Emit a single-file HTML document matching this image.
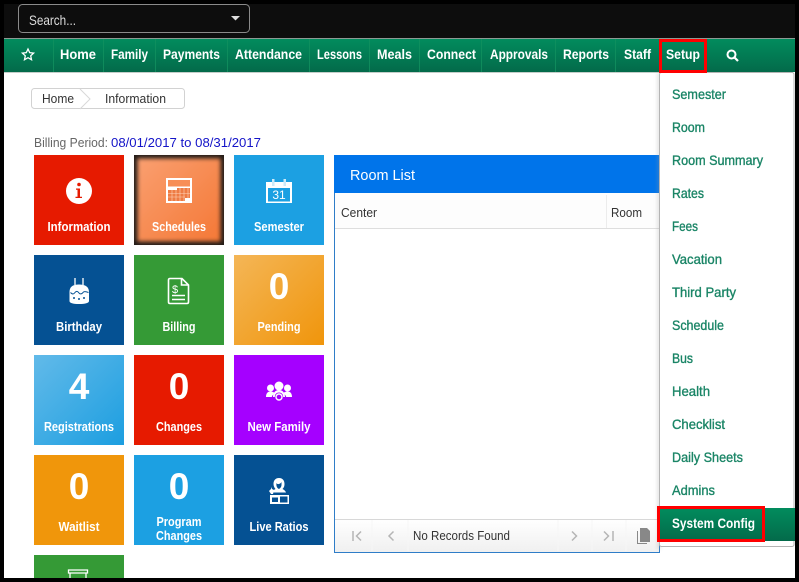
<!DOCTYPE html>
<html><head><meta charset="utf-8"><style>
html,body{margin:0;padding:0;background:#000;width:799px;height:582px;overflow:hidden}
svg{display:block}
text{font-family:"Liberation Sans",sans-serif}
.n{font-size:14px;font-weight:bold;fill:#fff}
.m{font-size:14px;font-weight:normal;fill:#1a8566;stroke:#1a8566;stroke-width:.35px}
.l{font-size:13px;font-weight:bold;fill:#fff;text-anchor:middle}
.b{font-size:37px;font-weight:bold;fill:#fff;text-anchor:middle}
.g{font-size:13px;fill:#333}
</style></head><body>
<svg width="799" height="582" viewBox="0 0 799 582" xmlns="http://www.w3.org/2000/svg">
<defs>
<linearGradient id="nav" x1="0" y1="0" x2="0" y2="1"><stop offset="0" stop-color="#028c5d"/><stop offset="1" stop-color="#036a4a"/></linearGradient>
<linearGradient id="sch" x1="0" y1="0" x2="1" y2="1"><stop offset="0" stop-color="#fa9f70"/><stop offset="1" stop-color="#f47836"/></linearGradient>
<linearGradient id="pen" x1="0" y1="0" x2="1" y2="1"><stop offset="0" stop-color="#f4b657"/><stop offset="1" stop-color="#f0950b"/></linearGradient>
<linearGradient id="reg" x1="0" y1="0" x2="1" y2="1"><stop offset="0" stop-color="#62bae9"/><stop offset="1" stop-color="#1c9ee0"/></linearGradient>
<linearGradient id="foot" x1="0" y1="0" x2="0" y2="1"><stop offset="0" stop-color="#fff"/><stop offset="1" stop-color="#f0f0f0"/></linearGradient>
<filter id="blur" x="-10%" y="-10%" width="120%" height="120%"><feGaussianBlur stdDeviation="2.200"/></filter>
<filter id="sh" x="-100%" y="-5%" width="300%" height="110%"><feGaussianBlur stdDeviation="1.500"/></filter>
<clipPath id="page"><rect x="4" y="4" width="791" height="574"/></clipPath>
</defs>
<rect width="799" height="582" fill="#000"/>
<g clip-path="url(#page)">
<rect x="4" y="4" width="791" height="574" fill="#fff"/>
<!-- top bar -->
<rect x="4" y="4" width="791" height="34" fill="#0d0d0d"/>
<rect x="18.500" y="4.500" width="231" height="28" rx="4" fill="#0d0d0d" stroke="#8a8a8a"/>
<text x="29" y="25" font-size="14" fill="#ddd" textLength="47" lengthAdjust="spacingAndGlyphs">Search...</text>
<path d="M231 16h9l-4.500 4.500z" fill="#ddd"/>
<!-- nav -->
<rect x="4" y="38" width="791" height="1" fill="#8c9a94"/>
<rect x="4" y="39" width="791" height="33" fill="url(#nav)"/>
<rect x="4" y="72" width="655" height="1" fill="#c4cdc9"/>
<g fill="#12915f" opacity=".8">
<rect x="53" y="39" width="1" height="33"/><rect x="103" y="39" width="1" height="33"/><rect x="155" y="39" width="1" height="33"/><rect x="227" y="39" width="1" height="33"/><rect x="309" y="39" width="1" height="33"/><rect x="369" y="39" width="1" height="33"/><rect x="419" y="39" width="1" height="33"/><rect x="481" y="39" width="1" height="33"/><rect x="555" y="39" width="1" height="33"/><rect x="615" y="39" width="1" height="33"/>
</g>
<path d="M28 49l1.700 3.600 3.900.5-2.900 2.700.8 3.900-3.500-2-3.500 2 .8-3.900-2.900-2.700 3.900-.5z" fill="none" stroke="#fff" stroke-width="1.300"/>
<text class="n" x="60" y="59" textLength="36" lengthAdjust="spacingAndGlyphs">Home</text>
<text class="n" x="111" y="59" textLength="37" lengthAdjust="spacingAndGlyphs">Family</text>
<text class="n" x="163" y="59" textLength="57" lengthAdjust="spacingAndGlyphs">Payments</text>
<text class="n" x="235" y="59" textLength="67" lengthAdjust="spacingAndGlyphs">Attendance</text>
<text class="n" x="317" y="59" textLength="45" lengthAdjust="spacingAndGlyphs">Lessons</text>
<text class="n" x="377" y="59" textLength="35" lengthAdjust="spacingAndGlyphs">Meals</text>
<text class="n" x="427" y="59" textLength="49" lengthAdjust="spacingAndGlyphs">Connect</text>
<text class="n" x="490" y="59" textLength="58" lengthAdjust="spacingAndGlyphs">Approvals</text>
<text class="n" x="563" y="59" textLength="46" lengthAdjust="spacingAndGlyphs">Reports</text>
<text class="n" x="624" y="59" textLength="27" lengthAdjust="spacingAndGlyphs">Staff</text>
<text class="n" x="666" y="59" textLength="34" lengthAdjust="spacingAndGlyphs">Setup</text>
<circle cx="731.500" cy="54.500" r="4" fill="none" stroke="#fff" stroke-width="2"/><path d="M734.500 57.500l3.500 3.500" stroke="#fff" stroke-width="2.200"/>
<!-- breadcrumb -->
<rect x="31.500" y="88.500" width="153" height="20" rx="3" fill="#fff" stroke="#d2d2d2"/>
<path d="M80 89l10 10-10 10" fill="#fff" stroke="#d8d8d8"/>
<text x="42" y="103" class="g" textLength="32" lengthAdjust="spacingAndGlyphs">Home</text>
<text x="105" y="103" class="g" textLength="61" lengthAdjust="spacingAndGlyphs">Information</text>
<!-- billing -->
<text x="34" y="147" font-size="13" fill="#666" textLength="74" lengthAdjust="spacingAndGlyphs">Billing Period:</text>
<text x="111" y="147" font-size="13" fill="#1414c8" textLength="150" lengthAdjust="spacingAndGlyphs">08/01/2017 to 08/31/2017</text>
<!-- tiles -->
<rect x="34" y="155" width="90" height="90" fill="#e61a00"/>
<rect x="134" y="155" width="90" height="90" fill="#231c18"/>
<rect x="137.500" y="158.500" width="83" height="83" fill="url(#sch)" filter="url(#blur)"/>
<rect x="234" y="155" width="90" height="90" fill="#1ca0e2"/>
<rect x="34" y="255" width="90" height="90" fill="#055193"/>
<rect x="134" y="255" width="90" height="90" fill="#359a36"/>
<rect x="234" y="255" width="90" height="90" fill="url(#pen)"/>
<rect x="34" y="355" width="90" height="90" fill="url(#reg)"/>
<rect x="134" y="355" width="90" height="90" fill="#e61a00"/>
<rect x="234" y="355" width="90" height="90" fill="#a500ff"/>
<rect x="34" y="455" width="90" height="90" fill="#f0960b"/>
<rect x="134" y="455" width="90" height="90" fill="#1ca0e2"/>
<rect x="234" y="455" width="90" height="90" fill="#055193"/>
<rect x="34" y="555" width="90" height="30" fill="#359a36"/>
<text class="l" x="79" y="231" textLength="63" lengthAdjust="spacingAndGlyphs">Information</text>
<text class="l" x="179" y="231" textLength="54" lengthAdjust="spacingAndGlyphs">Schedules</text>
<text class="l" x="279" y="231" textLength="50" lengthAdjust="spacingAndGlyphs">Semester</text>
<text class="l" x="79" y="331" textLength="46" lengthAdjust="spacingAndGlyphs">Birthday</text>
<text class="l" x="179" y="331" textLength="33" lengthAdjust="spacingAndGlyphs">Billing</text>
<text class="l" x="279" y="331" textLength="43" lengthAdjust="spacingAndGlyphs">Pending</text>
<text class="l" x="79" y="431" textLength="70" lengthAdjust="spacingAndGlyphs">Registrations</text>
<text class="l" x="179" y="431" textLength="46" lengthAdjust="spacingAndGlyphs">Changes</text>
<text class="l" x="279" y="431" textLength="63" lengthAdjust="spacingAndGlyphs">New Family</text>
<text class="l" x="79" y="531" textLength="41" lengthAdjust="spacingAndGlyphs">Waitlist</text>
<text class="l" x="179" y="526" textLength="45" lengthAdjust="spacingAndGlyphs">Program</text>
<text class="l" x="179" y="540" textLength="46" lengthAdjust="spacingAndGlyphs">Changes</text>
<text class="l" x="279" y="531" textLength="59" lengthAdjust="spacingAndGlyphs">Live Ratios</text>
<text class="b" x="279" y="299">0</text>
<text class="b" x="79" y="399">4</text>
<text class="b" x="179" y="399">0</text>
<text class="b" x="79" y="499">0</text>
<text class="b" x="179" y="499">0</text>
<!-- info icon -->
<circle cx="79" cy="191" r="13" fill="#fff"/>
<circle cx="79" cy="184.500" r="1.800" fill="#e61a00"/>
<path d="M76 188.500h4v8.300h2v1.200h-6.500v-1.200h2v-7.100h-1.500z" fill="#e61a00"/>
<!-- schedules icon -->
<path d="M166 178h26v25h-26z" fill="#fff"/>
<rect x="168" y="180" width="22" height="6.500" fill="#f78e57"/>
<path d="M168 190h9v-2h13v10h-5v3h-17z" fill="#ee7b44"/>
<path d="M168 193.500h22M168 197h17M172 190v11M176 190v11M180 188v13M184 188v13M188 188v10" stroke="#ffd4b8" stroke-width=".6"/>
<!-- semester icon -->
<rect x="266" y="182" width="26" height="21" fill="#fff"/>
<rect x="268" y="188" width="22" height="13.500" fill="#1ca0e2"/>
<rect x="272" y="179" width="2.500" height="7" fill="#cdeaf8"/><rect x="283.500" y="179" width="2.500" height="7" fill="#cdeaf8"/>
<text x="279" y="199" font-size="12" fill="#fff" text-anchor="middle">31</text>
<!-- birthday icon -->
<path d="M75 278v7M83 278v7" stroke="#fff" stroke-width="1.300"/>
<path d="M69.500 292c0-5 3-7.500 9.500-7.500s10 2.500 10 7.500v9c0 2-4 3-10 3s-9.500-1-9.500-3z" fill="#fff"/>
<path d="M70.500 292.500c2 2 3 2 4.500 0s3-1 4 .5 3 1 4-.5 3-1 5.500 0" fill="none" stroke="#055193" stroke-width="1"/>
<circle cx="74" cy="298" r="1" fill="#055193"/><circle cx="79" cy="299" r="1" fill="#055193"/><circle cx="84" cy="298" r="1" fill="#055193"/>
<!-- billing icon -->
<path d="M170 278.500h12l6.500 6.500v17c0 1-.5 1.500-1.500 1.500h-17c-1 0-1.500-.5-1.500-1.500v-22c0-1 .5-1.500 1.500-1.500z" fill="none" stroke="#fff" stroke-width="1.600"/>
<path d="M181.500 279v6h6.500" fill="none" stroke="#fff" stroke-width="1.600"/>
<text x="175" y="293" font-size="11" fill="#fff" text-anchor="middle">$</text>
<path d="M172 295.500h13M172 299.500h13" stroke="#fff" stroke-width="1.600"/>
<!-- new family icon -->
<g fill="#fff">
<circle cx="279" cy="386" r="4.500"/><circle cx="270.500" cy="388" r="3.500"/><circle cx="287.500" cy="388" r="3.500"/>
<path d="M266 397c0-4 2-5.500 4.500-5.500s3.500 1 4.500 2c-2 1-3 2-3.200 3.500z"/><path d="M292 397c0-4-2-5.500-4.500-5.500s-3.500 1-4.500 2c2 1 3 2 3.200 3.500z"/>
<path d="M273 397c0-5 3-7 6-7s6 2 6 7h-1.800c0-3-2-4.500-4.200-4.500s-4.200 1.500-4.200 4.500z"/>
</g>
<circle cx="279" cy="397" r="3" fill="none" stroke="#fff" stroke-width="1.400"/>
<!-- live ratios icon -->
<g fill="#fff">
<path d="M279 478c-4 0-5.500 3-5.500 6 0 2 1 4 2 5-2 1-3 2-3.500 3.500h14c-.5-1.500-1.500-2.500-3.500-3.500 1.500-1.500 2-3 2-5 0-3-1.500-6-5.500-6z"/>
<path d="M269 491l2-2v-2l1 2 2 1-1 4h-2z"/>
<path d="M270 495h19v9h-19z"/>
</g>
<path d="M272 497.500h6v4.500h-6zM280 496.500h7.500v6h-7.500z" fill="#055193"/>
<path d="M276.500 483c1 2 4 1 5-1 0 3 .5 5-2.500 7-2-1-3-3-2.500-6z" fill="#055193"/>
<!-- checklist icon -->
<path d="M68.500 570h19v3h-19zM70 573v6M86 573v6" fill="none" stroke="#fff" stroke-width="1.300"/>
<!-- panel -->
<rect x="334.500" y="155.500" width="325" height="397" fill="#fff" stroke="#2f7dc8"/>
<rect x="334" y="155" width="326" height="38" fill="#0074ea"/>
<text x="350" y="180" font-size="15" fill="#fff" textLength="65" lengthAdjust="spacingAndGlyphs">Room List</text>
<rect x="335" y="193" width="325" height="36" fill="#fdfdfd"/>
<rect x="335" y="228" width="325" height="1" fill="#dedede"/>
<rect x="606" y="195" width="1" height="33" fill="#ececec"/>
<text x="341" y="217" class="g" textLength="36" lengthAdjust="spacingAndGlyphs">Center</text>
<text x="611" y="217" class="g" textLength="31" lengthAdjust="spacingAndGlyphs">Room</text>
<rect x="335" y="519" width="324" height="33" fill="url(#foot)"/>
<rect x="335" y="519" width="324" height="1" fill="#d8d8d8"/>
<path d="M372 520v31M408 520v31M558 520v31M592 520v31M626 520v31" stroke="#f6f6f6"/>
<g fill="none" stroke="#b5b5b5" stroke-width="1.500">
<path d="M353 531v10M361 531.500l-4.500 4.500 4.500 4.500"/>
<path d="M393.500 531.500l-4.500 4.500 4.500 4.500"/>
<path d="M572 531.500l4.500 4.500-4.500 4.500"/>
<path d="M604 531.500l4.500 4.500-4.500 4.500M613 531v10"/>
</g>
<text x="413" y="540" class="g" textLength="97" lengthAdjust="spacingAndGlyphs">No Records Found</text>
<path d="M640 528h7l3 3v11h-10z" fill="#888"/><path d="M637 531h1v12h9v1h-10z" fill="#888"/>
<!-- dropdown -->
<rect x="657" y="73" width="4" height="476" fill="#999" opacity=".25" filter="url(#sh)"/>
<rect x="659.500" y="72.500" width="134.500" height="474" rx="2" fill="#fff" stroke="#b4b4b4"/>
<text class="m" x="672" y="99" textLength="54" lengthAdjust="spacingAndGlyphs">Semester</text>
<text class="m" x="672" y="132" textLength="33" lengthAdjust="spacingAndGlyphs">Room</text>
<text class="m" x="672" y="165" textLength="91" lengthAdjust="spacingAndGlyphs">Room Summary</text>
<text class="m" x="672" y="198" textLength="32" lengthAdjust="spacingAndGlyphs">Rates</text>
<text class="m" x="672" y="231" textLength="26" lengthAdjust="spacingAndGlyphs">Fees</text>
<text class="m" x="672" y="264" textLength="50" lengthAdjust="spacingAndGlyphs">Vacation</text>
<text class="m" x="672" y="297" textLength="64" lengthAdjust="spacingAndGlyphs">Third Party</text>
<text class="m" x="672" y="330" textLength="52" lengthAdjust="spacingAndGlyphs">Schedule</text>
<text class="m" x="672" y="363" textLength="21" lengthAdjust="spacingAndGlyphs">Bus</text>
<text class="m" x="672" y="396" textLength="38" lengthAdjust="spacingAndGlyphs">Health</text>
<text class="m" x="672" y="429" textLength="53" lengthAdjust="spacingAndGlyphs">Checklist</text>
<text class="m" x="672" y="462" textLength="71" lengthAdjust="spacingAndGlyphs">Daily Sheets</text>
<text class="m" x="672" y="495" textLength="43" lengthAdjust="spacingAndGlyphs">Admins</text>
<rect x="660" y="508" width="136" height="33" fill="url(#nav)"/>
<text class="n" x="672" y="528" textLength="83" lengthAdjust="spacingAndGlyphs">System Config</text>
<!-- red highlight boxes -->
<rect x="660.500" y="40.500" width="45" height="31" fill="none" stroke="#f00" stroke-width="3"/>
<rect x="658.500" y="507.500" width="105" height="33" fill="none" stroke="#f00" stroke-width="3"/>
</g>
</svg>
</body></html>
